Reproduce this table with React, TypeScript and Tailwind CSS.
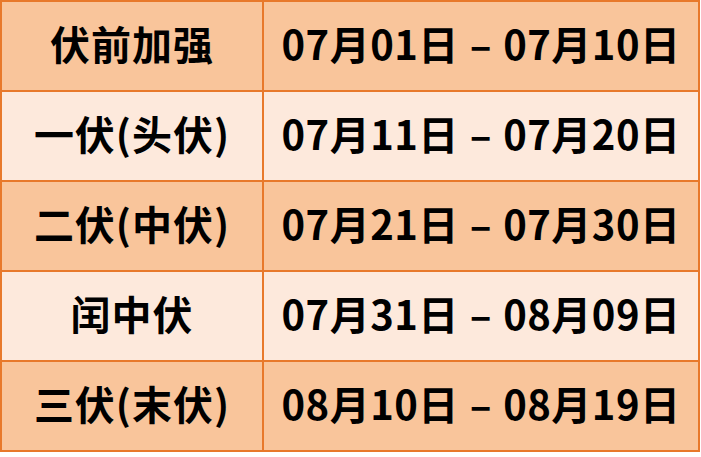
const rows = [
  { name: "伏前加强", range: ["07月01日", "07月10日"], dark: true },
  { name: "一伏(头伏)", range: ["07月11日", "07月20日"], dark: false },
  { name: "二伏(中伏)", range: ["07月21日", "07月30日"], dark: true },
  { name: "闰中伏", range: ["07月31日", "08月09日"], dark: false },
  { name: "三伏(末伏)", range: ["08月10日", "08月19日"], dark: true },
];

export default function App() {
  return (
    <div className="w-[701px] h-[457px] bg-white">
      <div
        className="w-[700px] border-l-2 border-t-2 border-[#e8792b] text-black font-bold text-[40px] leading-none"
        style={{ fontFamily: '"Noto Sans CJK SC", "Noto Sans", sans-serif' }}
      >
        {rows.map((r) => (
          <div
            key={r.name}
            className={`flex h-[90px] border-b-2 border-[#e8792b] ${r.dark ? "bg-[#f9c59b]" : "bg-[#fde9dc]"}`}
          >
            <div className="w-[262px] border-r-2 border-[#e8792b] flex items-center justify-center pb-[6px] tracking-[1px]">
              {r.name}
            </div>
            <div className="flex-1 border-r-2 border-[#e8792b] flex items-center justify-center gap-[11px] pb-[6px] tracking-[0.5px]">
              <span>{r.range[0]}</span>
              <span>–</span>
              <span>{r.range[1]}</span>
            </div>
          </div>
        ))}
      </div>
    </div>
  );
}
